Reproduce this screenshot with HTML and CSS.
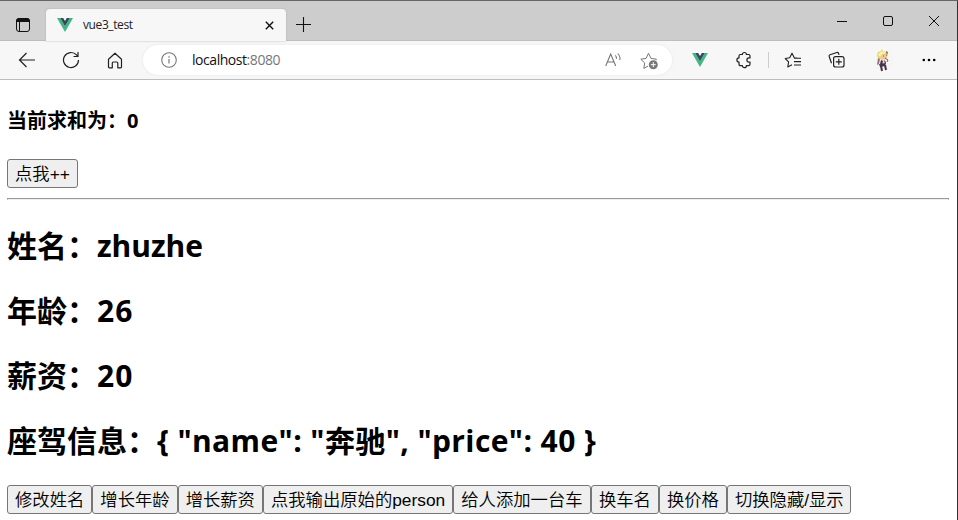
FILE: index.html
```html
<!DOCTYPE html>
<html lang="zh-CN">
<head>
<meta charset="utf-8">
<title>vue3_test</title>
<link rel="stylesheet" href="styles.css">
</head>
<body>
<div class="window">
  <header class="titlebar">
    <svg class="tab-menu" width="16" height="16" viewBox="0 0 16 16"><rect x="1.5" y="1.5" width="13" height="13" rx="2.5" fill="none" stroke="#111"/><path d="M1.5 4.500V4a2.500 2.500 0 0 1 2.500-2.500h8A2.500 2.500 0 0 1 14.500 4v.5z" fill="#111" stroke="#111"/><path d="M4.500 5v9" stroke="#111"/></svg>
    <div class="tab">
      <svg class="vue" width="16" height="14" viewBox="0 0 16 14"><path d="M0 0h3.200L8 8.300 12.800 0H16L8 14z" fill="#41b883"/><path d="M3.200 0h3L8 3.100 9.800 0h3L8 8.300z" fill="#35495e"/></svg>
      <span class="tab-title">vue3_test</span>
      <svg class="tab-close" width="9" height="9" viewBox="0 0 9 9"><path d="M.8.8l7.400 7.400M8.200.8L.8 8.200" stroke="#111" stroke-width="1.400"/></svg>
    </div>
    <svg class="new-tab" width="15" height="15" viewBox="0 0 15 15"><path d="M7.500 0v15M0 7.500h15" stroke="#111" stroke-width="1.100"/></svg>
    <div class="controls">
      <svg width="12" height="12" viewBox="0 0 12 12"><path d="M1 6.500h10" stroke="#111"/></svg>
      <svg width="12" height="12" viewBox="0 0 12 12"><rect x="1.500" y="1.500" width="9" height="9" rx="1.500" fill="none" stroke="#111"/></svg>
      <svg width="12" height="12" viewBox="0 0 12 12"><path d="M1 1l10 10M11 1L1 11" stroke="#111"/></svg>
    </div>
  </header>
  <nav class="toolbar">
    <svg class="back" width="18" height="16" viewBox="0 0 18 16"><path d="M17 8H1.500M8.500 1l-7 7 7 7" fill="none" stroke="#222" stroke-width="1.200"/></svg>
    <svg class="reload" width="18" height="18" viewBox="0 0 18 18"><path d="M16.500 9a7.500 7.500 0 1 1-2-5.100L16 5.500M16 1v4.500h-4.500" fill="none" stroke="#222" stroke-width="1.200"/></svg>
    <svg class="home" width="16" height="17" viewBox="0 0 16 17"><path d="M1.500 7.200L8 1.200l6.500 6V15q0 .8-.8.8h-2.900V11q0-1-1-1H6.300q-1 0-1 1v4.800H2.300q-.8 0-.8-.8z" fill="none" stroke="#222" stroke-width="1.200" stroke-linejoin="round"/></svg>
    <div class="address">
      <svg class="info" width="16" height="16" viewBox="0 0 16 16"><circle cx="8" cy="8" r="7.300" fill="none" stroke="#777" stroke-width="1.100"/><path d="M8 7v4.500M8 4.300v1.400" stroke="#777" stroke-width="1.200"/></svg>
      <span class="url">localhost<span class="port">:8080</span></span>
      <svg class="read" width="17" height="14" viewBox="0 0 17 14"><path d="M.7 13L5.700 1l5 12M2.400 9h6.600M10.300 2.300q1.500 1.500 1 3.600M12.700.6q3.200 2.500 2 6.400" fill="none" stroke="#777" stroke-width="1.100"/></svg>
      <svg class="star" width="18" height="18" viewBox="0 0 18 18"><path d="M16 8.300l.3-1.100-5.300-.8L8.500 1.200 6.100 6.400.8 7.200l3.900 3.800-.9 5.400L8 14.100" fill="none" stroke="#777" stroke-linejoin="round"/><circle cx="13.300" cy="12.700" r="4.500" fill="#777"/><path d="M13.300 10.200v5M10.800 12.700h5" stroke="#fff"/></svg>
    </div>
    <svg class="extension" width="16" height="14" viewBox="0 0 16 14"><path d="M0 0h3.200L8 8.300 12.800 0H16L8 14z" fill="#41b883"/><path d="M3.200 0h3L8 3.100 9.800 0h3L8 8.300z" fill="#35495e"/></svg>
    <svg class="puzzle" width="16" height="18" viewBox="0 0 16 18"><path d="M4.400 3.500h2a2 2 0 0 1 4 0h2.200q1.400 0 1.400 1.400v2h-1a2 2 0 0 0 0 4.200h1v2.200q0 1.400-1.400 1.400h-2.200a2 2 0 0 1-4 0h-2Q3 14.700 3 13.300v-2.200a2.100 2.100 0 0 1 0-4.200v-2q0-1.400 1.400-1.400z" fill="none" stroke="#222" stroke-width="1.200" stroke-linejoin="round"/></svg>
    <span class="divider"></span>
    <svg class="favorites" width="18" height="17" viewBox="0 0 18 17"><path d="M14 6.200l-3.700-.5L8 1.200 5.700 5.700 1.200 6.500l3.400 3.400-.8 5L8 12.700M10 6.200h7M10 9.600h7M10 13h7" fill="none" stroke="#222" stroke-width="1.100" stroke-linejoin="round"/></svg>
    <svg class="collections" width="17" height="18" viewBox="0 0 17 18"><path d="M3.500 12.300L1.200 5.500q-.4-1.300.8-1.700l6.800-2.300q1.200-.4 1.700.8l.5 1.600" fill="none" stroke="#222" stroke-width="1.200"/><rect x="5.600" y="5.600" width="10.400" height="10.400" rx="2" fill="#f7f7f7" stroke="#222" stroke-width="1.200"/><path d="M10.800 7.800v6M7.800 10.800h6" stroke="#222" stroke-width="1.200"/></svg>
    <svg class="avatar" width="20" height="23" viewBox="0 0 20 23"><circle cx="10" cy="12" r="10" fill="#f4f6f2"/><path d="M5 3l3-1 1-2 1 2 4 1 1 3-2 4-4 1-4-2-1-3z" fill="#e8d36e"/><path d="M7 3l4-1 2 2-4 1-2 3-2-2z" fill="#fff2a3"/><path d="M9 6l4-1 1 4-3 2-3-2z" fill="#f1c4a7"/><path d="M13 2l2 1v2l-2-1M5 9l2 1-1 5-2 1z" fill="#997078"/><path d="M9 10l3 1 1 4-5 1z" fill="#ead9c7"/><path d="M8 11l2 1-1 4-2-1M11 11l2 2-1 2M6 15l7-1-1 3-5 1z" fill="#49324c"/><path d="M8 17l1 5M12 16l1 5" stroke="#4b2c4b" stroke-width="2"/><path d="M12 9l3 2-1 2M10 7h1M13 6h1" fill="none" stroke="#875052"/></svg>
    <svg class="more" width="14" height="4" viewBox="0 0 14 4"><circle cx="1.800" cy="2" r="1.300"/><circle cx="7" cy="2" r="1.300"/><circle cx="12.200" cy="2" r="1.300"/></svg>
  </nav>
  <main class="page">
    <h4>当前求和为：<span>0</span></h4>
    <button class="increment">点我++</button>
    <hr>
    <h2>姓名：<span class="name">zhuzhe</span></h2>
    <h2>年龄：<span class="number">26</span></h2>
    <h2>薪资：<span class="number">20</span></h2>
    <h2>座驾信息：<span class="json">{ "name": "奔驰", "price": 40 }</span></h2>
    <div class="actions"><button>修改姓名</button><button>增长年龄</button><button>增长薪资</button><button class="raw">点我输出原始的person</button><button class="car">给人添加一台车</button><button>换车名</button><button>换价格</button><button class="toggle">切换隐藏/显示</button></div>
  </main>
</div>
</body>
</html>
```
FILE: styles.css
```css
* { box-sizing: border-box; }
body { margin: 0; background: #fff; overflow: hidden; color: #000; font-family: "Open Sans", "Noto Sans CJK SC", sans-serif; }
svg { display: block; flex: none; }
.window { width: 958px; height: 520px; border-top: 1px solid #666; border-right: 1px solid #333; overflow: hidden; }
.titlebar { height: 40px; display: flex; background: #cdcdcd; box-shadow: inset 0 -1px #bdbdbd; }
.tab-menu { margin: 16px 0 0 15px; }
.tab { width: 240px; height: 32px; margin: 8px 0 0 15px; border-radius: 4px 4px 0 0; background: #f7f7f7; box-shadow: 0 0 2px #aaa; display: flex; align-items: center; padding: 0 12px 0 11px; }
.tab-title { margin-left: 10px; font-size: 12px; line-height: 18px; color: #222; letter-spacing: -.4px; }
.tab-close { margin-left: auto; }
.new-tab { margin: 16px 0 0 10px; }
.controls { display: flex; gap: 34px; margin: 14px 17px 0 auto; }
.toolbar { height: 39px; background: #f7f7f7; border-bottom: 1px solid #bdbdbd; display: flex; align-items: center; }
.back { margin-left: 18px; }
.reload { margin-left: 26px; }
.home { margin-left: 27px; }
.address { width: 529px; height: 30px; margin-left: 20px; border-radius: 15px; background: #fff; box-shadow: 0 0 3px #e5e5e5; display: flex; align-items: center; }
.info { margin-left: 18px; }
.url { margin-left: 15px; font-size: 14px; line-height: 20px; color: #111; letter-spacing: -.45px; }
.port { color: #777; }
.read { margin-left: auto; }
.star { margin: 1px 14px 0 18px; }
.extension { margin-left: 20px; }
.puzzle { margin-left: 28px; }
.divider { width: 1px; height: 16px; margin-left: 16px; background: #ccc; }
.favorites { margin-left: 15px; }
.collections { margin-left: 26px; }
.avatar { margin-left: 28px; }
.more { margin-left: 29px; }
.page { padding: 0 8px 0 7px; }
h4, h2 { margin: 0; font-weight: 700; white-space: nowrap; }
h4 { font-size: 20px; line-height: 30px; padding-top: 26px; height: 79px; }
h2 { font-size: 30px; line-height: 42px; height: 65px; }
.name { letter-spacing: -.05px; }
.number { letter-spacing: 1px; }
.json { letter-spacing: .4px; }
button { height: 29px; padding: 1px 7px 0; border: 1px solid #767676; border-radius: 3px; background: #efefef; color: #000; font: 350 17.33px/26px "Liberation Sans", "Noto Sans CJK SC", sans-serif; white-space: nowrap; }
.increment { display: block; width: 71px; }
hr { height: 2px; margin: 10px 0 25px; border: 1px solid #999; border-bottom-color: #eee; }
.actions { display: flex; }
.raw { width: 190px; }
.car { width: 138px; }
.toggle { width: 124px; }
```
